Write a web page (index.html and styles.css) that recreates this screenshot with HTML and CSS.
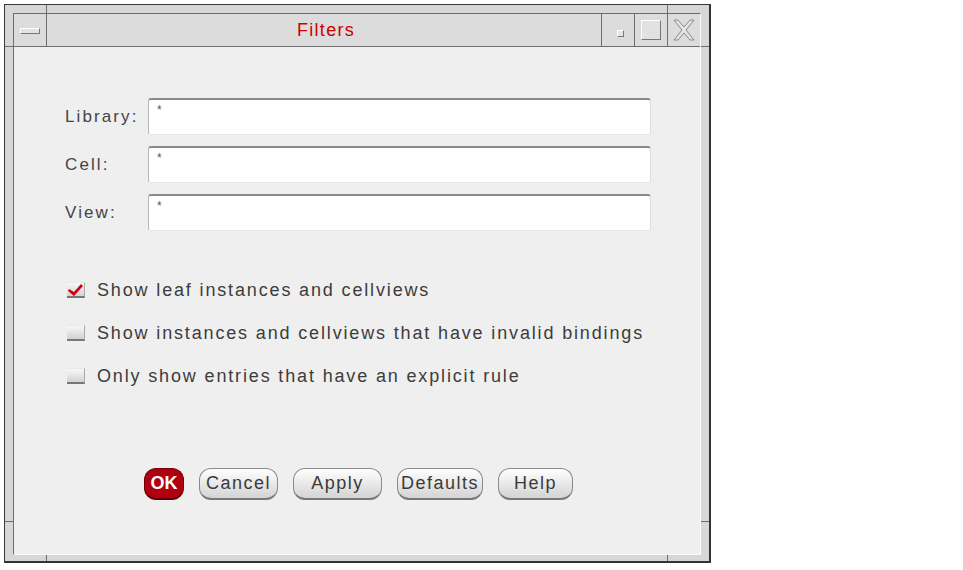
FILE: index.html
```html
<!DOCTYPE html>
<html>
<head>
<meta charset="utf-8">
<link rel="stylesheet" href="styles.css">
</head>
<body>
<div class="window">
  <span class="mark mark-tl-v"></span>
  <span class="mark mark-tl-h"></span>
  <span class="mark mark-tr-v"></span>
  <span class="mark mark-tr-h"></span>
  <span class="mark mark-bl-v"></span>
  <span class="mark mark-bl-h"></span>
  <span class="mark mark-br-v"></span>
  <span class="mark mark-br-h"></span>
  <div class="inner">
    <div class="titlebar">
      <div class="tb-btn tb-menu"><span class="menu-bar"></span></div>
      <div class="title">Filters</div>
      <div class="tb-btn tb-min"><span class="min-dot"></span></div>
      <div class="tb-btn tb-max"><span class="max-box"></span></div>
      <div class="tb-btn tb-close">
        <svg width="26" height="24" viewBox="0 0 26 24">
          <path d="M3 2 L7 2 L13 9 L19 2 L23 2 L15 12 L23 22 L19 22 L13 15 L7 22 L3 22 L11 12 Z" fill="#e4e4e4" stroke="#8a8a8a" stroke-width="1"/>
        </svg>
      </div>
    </div>
    <div class="content">
      <div class="form">
        <label class="lbl">Library:</label>
        <div class="field">*</div>
        <label class="lbl">Cell:</label>
        <div class="field">*</div>
        <label class="lbl">View:</label>
        <div class="field">*</div>
      </div>
      <div class="checks">
        <div class="check">
          <span class="box">
            <svg width="16" height="14" viewBox="0 0 16 14"><path d="M1 6 L6 9 L13 1 L15 3 L6 13 L0 8 Z" fill="#d00010"/></svg>
          </span>
          <span class="ctext">Show leaf instances and cellviews</span>
        </div>
        <div class="check">
          <span class="box"></span>
          <span class="ctext">Show instances and cellviews that have invalid bindings</span>
        </div>
        <div class="check">
          <span class="box"></span>
          <span class="ctext">Only show entries that have an explicit rule</span>
        </div>
      </div>
      <div class="buttons">
        <button class="btn ok">OK</button>
        <button class="btn w-cancel">Cancel</button>
        <button class="btn w-apply">Apply</button>
        <button class="btn w-defaults">Defaults</button>
        <button class="btn w-help">Help</button>
      </div>
    </div>
  </div>
</div>
</body>
</html>
```
FILE: styles.css
```css
html, body {
  margin: 0;
  padding: 0;
  background: #ffffff;
  font-family: "Liberation Sans", Arial, sans-serif;
}

.window {
  position: relative;
  box-sizing: border-box;
  margin: 4px 0 0 4px;
  width: 707px;
  height: 559px;
  background: #d7d7d7;
  border-top: 1px solid #3a3a3a;
  border-left: 1px solid #3a3a3a;
  border-right: 2px solid #333;
  border-bottom: 2px solid #333;
  padding: 8px 8px 6px 8px;
}

.mark {
  position: absolute;
  background: #6e6e6e;
}
.mark-tl-v { left: 41px; top: 0; width: 1px; height: 8px; }
.mark-tl-h { left: 0; top: 41px; width: 8px; height: 1px; }
.mark-tr-v { left: 662px; top: 0; width: 1px; height: 8px; }
.mark-tr-h { right: 0; top: 41px; width: 8px; height: 1px; }
.mark-bl-v { left: 41px; bottom: 0; width: 1px; height: 6px; }
.mark-bl-h { left: 0; bottom: 39px; width: 8px; height: 1px; }
.mark-br-v { left: 662px; bottom: 0; width: 1px; height: 6px; }
.mark-br-h { right: 0; bottom: 39px; width: 8px; height: 1px; }

.inner {
  box-sizing: border-box;
  height: 100%;
  display: flex;
  flex-direction: column;
  border-top: 1px solid #6e6e6e;
  border-left: 1px solid #6e6e6e;
  border-right: 1px solid #fafafa;
  border-bottom: 1px solid #fafafa;
}

.titlebar {
  display: flex;
  height: 32px;
  background: #dcdcdc;
  border-bottom: 1px solid #6e6e6e;
}

.tb-btn {
  width: 32px;
  display: flex;
  align-items: center;
  justify-content: center;
}
.tb-menu { border-right: 1px solid #6e6e6e; }
.tb-min, .tb-max, .tb-close { border-left: 1px solid #6e6e6e; }

.menu-bar {
  display: block;
  width: 18px;
  height: 4px;
  background: #e2e2e2;
  border-top: 1px solid #fff;
  border-left: 1px solid #fff;
  border-right: 1px solid #777;
  border-bottom: 1px solid #777;
  margin-top: 2px;
}

.min-dot {
  display: block;
  width: 5px;
  height: 5px;
  background: #e6e6e6;
  border-top: 1px solid #fff;
  border-left: 1px solid #fff;
  border-right: 1px solid #777;
  border-bottom: 1px solid #777;
  margin-left: 4px;
  margin-top: 6px;
}

.max-box {
  display: block;
  width: 18px;
  height: 18px;
  background: #e2e2e2;
  border-top: 1px solid #fff;
  border-left: 1px solid #fff;
  border-right: 1px solid #777;
  border-bottom: 1px solid #777;
}

.title {
  flex: 1;
  text-align: center;
  color: #cc0000;
  font-size: 18px;
  line-height: 32px;
  letter-spacing: 1.3px;
  padding-left: 4px;
}

.content {
  flex: 1;
  background: #efefef;
  padding: 51px 0 0 51px;
  color: #3c3c3c;
}

.form {
  display: grid;
  grid-template-columns: 83px 503px;
  grid-auto-rows: 37px;
  row-gap: 11px;
  align-items: center;
}

.lbl {
  font-size: 17px;
  letter-spacing: 2.1px;
  color: #444;
}

.field {
  box-sizing: border-box;
  height: 37px;
  background: #fff;
  border-top: 2px solid #8a8a8a;
  border-left: 1px solid #b8b8b8;
  border-right: 1px solid #dcdcdc;
  border-bottom: 1px solid #e8e8e8;
  border-radius: 3px;
  font-size: 12px;
  color: #555;
  padding: 4px 0 0 8px;
  line-height: 12px;
}

.checks {
  margin-top: 48px;
  display: flex;
  flex-direction: column;
  row-gap: 21px;
}

.check {
  display: flex;
  align-items: center;
  height: 22px;
}

.box {
  box-sizing: border-box;
  width: 18px;
  height: 16px;
  margin-left: 2px;
  margin-right: 12px;
  background: linear-gradient(#f8f8f8, #d2d2d2);
  border-bottom: 2px solid #777;
  border-right: 1px solid #aaa;
  border-top: 1px solid #e8e8e8;
  display: flex;
  align-items: center;
  justify-content: center;
}

.ctext {
  font-size: 18px;
  letter-spacing: 1.85px;
  color: #3c3c3c;
}

.buttons {
  margin-top: 81px;
  display: flex;
  padding-left: 79px;
}

.btn {
  box-sizing: border-box;
  height: 32px;
  margin-right: 15px;
  border-radius: 12px;
  border: 1px solid #8a8a8a;
  border-bottom: 2px solid #777;
  background: linear-gradient(#ffffff, #e4e4e4 60%, #d4d4d4);
  font-family: "Liberation Sans", Arial, sans-serif;
  font-size: 18px;
  letter-spacing: 1.5px;
  color: #3a3a3a;
  padding: 0;
}

.ok {
  width: 40px;
  background: #b00010;
  border: 1px solid #700008;
  border-bottom: 2px solid #600008;
  color: #fff;
  font-weight: bold;
  font-size: 18px;
  letter-spacing: 0;
  border-radius: 12px;
}
.w-cancel { width: 79px; }
.w-apply { width: 89px; }
.w-defaults { width: 86px; }
.w-help { width: 75px; }
```
